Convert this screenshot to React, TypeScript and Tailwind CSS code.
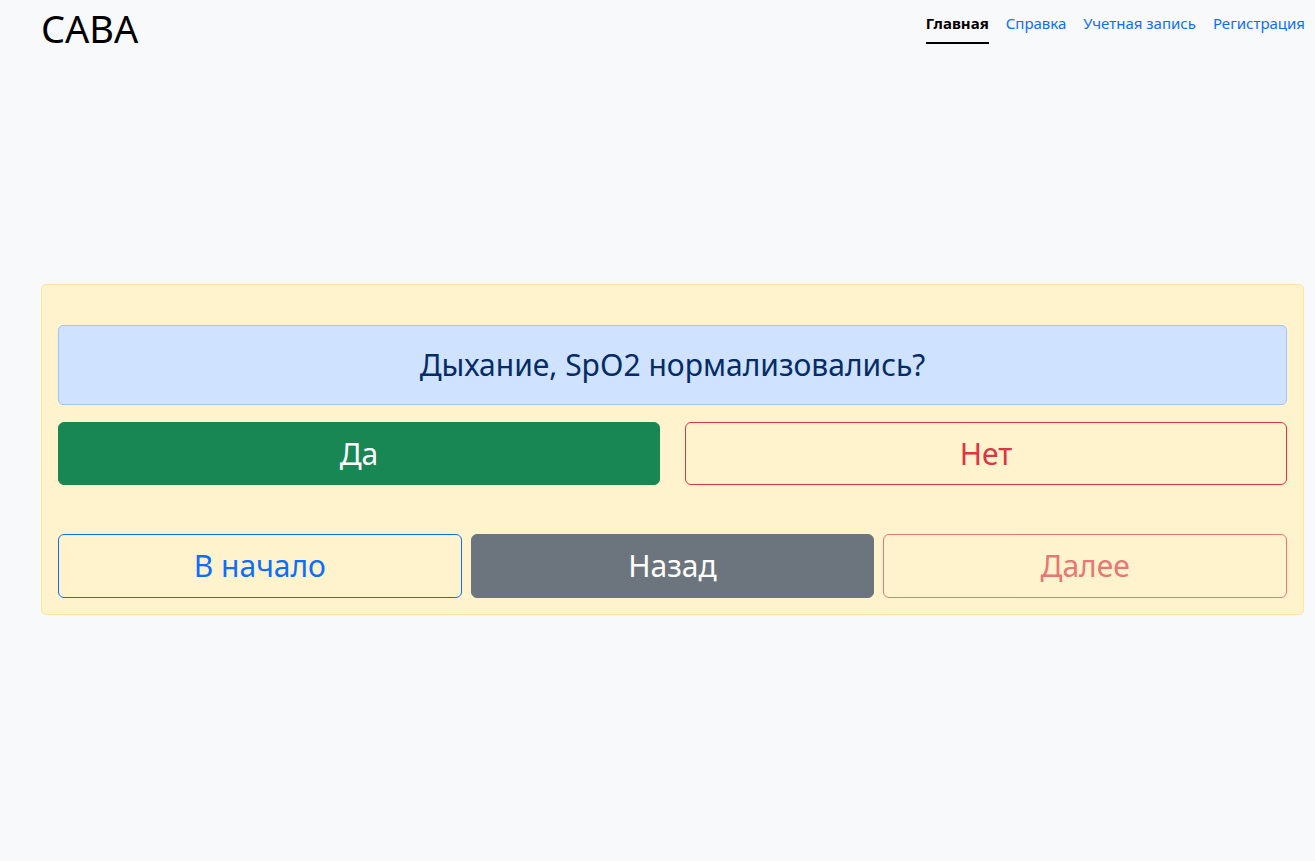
export default function App() {
  return (
    <div className="min-h-[861px] bg-[#f8f9fa] font-['Noto_Sans',sans-serif] text-[#212529]">
      {/* header */}
      <div className="flex items-start justify-between pl-[41px] pr-[10px]">
        <div className="mt-[2px] text-[38px] leading-[52px] text-black">CABA</div>
        <nav className="flex gap-[17px] pl-[4px] pt-[12px] text-[15px] leading-[22px]">
          <a className="border-b-2 border-black pb-[8px] font-bold text-black">Главная</a>
          <a className="text-[#0d6efd]">Справка</a>
          <a className="text-[#0d6efd]">Учетная запись</a>
          <a className="text-[#0d6efd]">Регистрация</a>
        </nav>
      </div>

      {/* card */}
      <div className="ml-[41px] mr-[11px] mt-[230px] rounded-[5px] border border-[#ffe69c] bg-[#fff3cd] px-[16px] pb-[16px] pt-[40px]">
        <div className="rounded-[5px] border border-[#9ec5fe] bg-[#cfe2ff] py-[18px] text-center text-[30px] leading-[42px] text-[#052c65]">
          Дыхание, SpO2 нормализовались?
        </div>
        <div className="mt-[17px] grid grid-cols-2 gap-[25px]">
          <button className="rounded-[6px] border border-[#198754] bg-[#198754] py-[9px] text-[30px] leading-[43px] text-white">
            Да
          </button>
          <button className="rounded-[6px] border border-[#dc3545] py-[9px] text-[30px] leading-[43px] text-[#dc3545]">
            Нет
          </button>
        </div>
        <div className="mt-[49px] grid grid-cols-3 gap-[9px]">
          <button className="rounded-[6px] border border-[#0d6efd] py-[9px] text-[30px] leading-[44px] text-[#0d6efd]">
            В начало
          </button>
          <button className="rounded-[6px] border border-[#6c757d] bg-[#6c757d] py-[9px] text-[30px] leading-[44px] text-white">
            Назад
          </button>
          <button className="rounded-[6px] border border-[#dc3545] py-[9px] text-[30px] leading-[44px] text-[#dc3545] opacity-65">
            Далее
          </button>
        </div>
      </div>
    </div>
  );
}
